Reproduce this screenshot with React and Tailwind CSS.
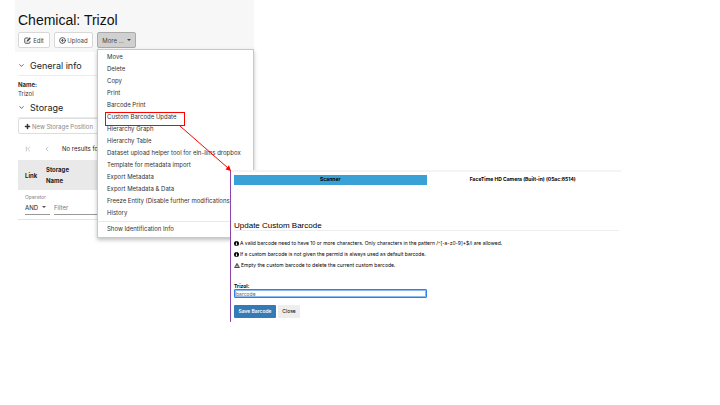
import { CircleArrowUp, ChevronDown, ChevronLeft, ChevronFirst, Plus } from "lucide-react";

const actions = [
  "Move",
  "Delete",
  "Copy",
  "Print",
  "Barcode Print",
  "Custom Barcode Update",
  "Hierarchy Graph",
  "Hierarchy Table",
  "Dataset upload helper tool for eln-lims dropbox",
  "Template for metadata import",
  "Export Metadata",
  "Export Metadata & Data",
  "Freeze Entity (Disable further modifications)",
  "History",
];

function Caret() {
  return (
    <svg viewBox="0 0 8 4" className="h-[2px] w-1" aria-hidden="true">
      <path d="M0 0h8L4 4z" fill="currentColor" />
    </svg>
  );
}

function EditIcon() {
  return (
    <svg viewBox="0 0 14 14" className="size-[7px]" fill="none" stroke="currentColor" aria-hidden="true">
      <path d="M8.500 2H3.500A2 2 0 0 0 1.500 4v6.500a2 2 0 0 0 2 2H10a2 2 0 0 0 2-2V8.500" strokeWidth="1.800" />
      <path d="M5.500 9l.6-2.600L11.500 1l2 2L8.100 8.400z" fill="currentColor" strokeWidth="0.500" />
    </svg>
  );
}

function InfoIcon() {
  return (
    <svg viewBox="0 0 12 12" className="size-[5px] shrink-0" aria-hidden="true">
      <circle cx="6" cy="6" r="6" fill="#000" />
      <path d="M5 2h2v1.500H5zM4.500 5H7v3.600h.8V10H4.300V8.600H5V6.200h-.5z" fill="#fff" />
    </svg>
  );
}

function WarningIcon() {
  return (
    <svg viewBox="0 0 12 11" className="h-[5px] w-[6px] shrink-0" aria-hidden="true">
      <path d="M6 1 11.200 10H.8z" fill="#fff" stroke="#000" strokeWidth="1.600" strokeLinejoin="round" />
      <path d="M5.200 4h1.600v3H5.200zM5.200 7.600h1.600v1.400H5.200z" fill="#000" />
    </svg>
  );
}

function MoreMenu() {
  return (
    <div className="absolute top-full left-0 mt-px w-[157px] border border-[#c8c8c8] bg-white pt-px pb-[2px] shadow-[0_2px_4px_rgba(0,0,0,0.25)]">
      <ul>
        {actions.map((action) => (
          <li key={action}>
            <button type="button" className="block h-3 pl-[9px] text-[6px] leading-3 whitespace-nowrap text-[#333]">
              {action}
            </button>
          </li>
        ))}
      </ul>
      <div className="mt-[2px] border-t border-[#e8e8e8] pt-px">
        <button type="button" className="block h-3 pl-[9px] text-[6px] leading-3 text-[#333]">
          Show Identification Info
        </button>
      </div>
    </div>
  );
}

function SectionTitle({ children }) {
  return (
    <h2 className="flex h-5 items-center gap-[5px] border-b border-[#ececec] text-[9px] text-[#222]">
      <ChevronDown className="size-[7px] text-[#555]" strokeWidth={3} />
      {children}
    </h2>
  );
}

function EntityView() {
  return (
    <main className="w-[239px]">
      <header className="bg-[#f7f7f7] px-[3px] pt-3 pb-1">
        <h1 className="h-5 font-['Liberation_Sans',sans-serif] text-[14px] leading-4 text-[#111]">Chemical: Trizol</h1>
        <div className="flex h-4 gap-1 text-[6px] text-[#444]">
          <button type="button" className="flex w-8 items-center justify-center gap-[2px] rounded-[2px] border border-[#d8d8d8] bg-white">
            <EditIcon />
            Edit
          </button>
          <button type="button" className="flex w-[39px] items-center justify-center gap-px rounded-[2px] border border-[#d8d8d8] bg-white">
            <CircleArrowUp className="size-[7px]" strokeWidth={3} />
            Upload
          </button>
          <div className="relative z-10">
            <button type="button" className="flex h-4 w-[39px] items-center justify-center gap-[3px] rounded-[2px] border border-[#aaa] bg-[#d0d0d0]">
              More ...
              <Caret />
            </button>
            <MoreMenu />
          </div>
        </div>
      </header>

      <div className="px-[3px] pt-1">
        <SectionTitle>General info</SectionTitle>
        <dl className="pt-1 text-[6px] leading-[9px] text-[#333]">
          <dt className="font-bold">Name:</dt>
          <dd>Trizol</dd>
        </dl>
        <SectionTitle>Storage</SectionTitle>
        <button type="button" className="flex h-4 w-[84px] items-center gap-px rounded-[2px] border border-[#ddd] pl-[5px] text-[6px] whitespace-nowrap text-[#888]">
          <Plus className="size-[7px] text-[#333]" strokeWidth={5} />
          New Storage Position
        </button>
        <div className="flex h-[26px] items-center gap-[11px] pt-[3px] pl-[6px] text-[6px] text-[#222]">
          <button type="button" aria-label="First page">
            <ChevronFirst className="size-2 text-[#aaa]" />
          </button>
          <button type="button" aria-label="Previous page">
            <ChevronLeft className="size-2 text-[#aaa]" />
          </button>
          <span>No results found</span>
        </div>
      </div>

      <table className="ml-[3px] w-[236px] table-fixed border-b border-[#e4e4e4] text-left text-[6px] text-[#222]">
        <thead>
          <tr className="h-[30px] bg-[#e9e9e9] leading-[11px]">
            <th className="w-7 pl-[7px]">Link</th>
            <th>
              Storage
              <br />
              Name
            </th>
          </tr>
        </thead>
        <tbody>
          <tr>
            <td colSpan={2} className="h-[29px] pb-1 pl-[7px] align-bottom">
              <div className="flex items-end gap-1">
                <label className="text-[5px] leading-[7px] text-[#888]">
                  Operator
                  <span className="relative flex h-[14px] w-[25px] items-center border-b border-[#999] text-[#222]">
                    <select className="w-full appearance-none bg-transparent text-[6px]" defaultValue="AND">
                      <option>AND</option>
                      <option>OR</option>
                    </select>
                    <span className="pointer-events-none absolute right-1 text-[#555]">
                      <Caret />
                    </span>
                  </span>
                </label>
                <input aria-label="Filter" placeholder="Filter" className="h-[14px] grow border-b border-[#999] text-[6px] placeholder:text-[#777]" />
              </div>
            </td>
          </tr>
        </tbody>
      </table>
    </main>
  );
}

function BarcodeDialog() {
  return (
    <section className="absolute top-[170px] left-[230px] z-20 w-[391px] border-l border-[#8e44ad] bg-white pb-1 text-[5px] text-black">
      <div className="border-t-2 border-[#f4f4f4] pt-[3px] pr-[2px] pl-[3px]">
        <div className="grid grid-cols-2 text-center font-bold">
          <button type="button" className="h-[10px] bg-[#39a1d6]">Scanner</button>
          <button type="button" className="h-[10px]">FaceTime HD Camera (Built-in) (05ac:8514)</button>
        </div>
        <h2 className="mt-[34px] h-3 border-b border-[#eee] font-['Liberation_Sans',sans-serif] text-[8px] leading-[14px]">
          Update Custom Barcode
        </h2>
        <div className="pt-[7px] leading-[11px]">
          <p className="flex items-center gap-px">
            <InfoIcon />
            {"A valid barcode need to have 10 or more characters. Only characters in the pattern /^[-a-z0-9]+$/i are allowed."}
          </p>
          <p className="flex items-center gap-px">
            <InfoIcon />
            If a custom barcode is not given the permId is always used as default barcode.
          </p>
          <p className="flex items-center gap-px">
            <WarningIcon />
            Empty the custom barcode to delete the current custom barcode.
          </p>
        </div>
        <label htmlFor="barcode" className="mt-3 block leading-[6px] font-bold">Trizol:</label>
        <input
          id="barcode"
          placeholder="barcode"
          className="block h-[9px] w-1/2 rounded-[1px] border border-[#2f7fdc] pl-px text-[5px] leading-[7px] ring-1 ring-[#8fbcf0] outline-none ring-inset placeholder:text-[#666]"
        />
        <div className="mt-[7px] flex gap-[2px]">
          <button type="button" className="h-[13px] w-[42px] rounded-[1px] bg-[#337ab7] font-semibold text-white">Save Barcode</button>
          <button type="button" className="h-[13px] w-[22px] rounded-[1px] bg-[#eee]">Close</button>
        </div>
      </div>
    </section>
  );
}

function Callout() {
  return (
    <svg className="pointer-events-none absolute top-0 left-0 z-30 h-60 w-64" viewBox="0 0 256 240" aria-hidden="true">
      <rect x="105.500" y="112.500" width="79" height="13" fill="none" stroke="#f00" />
      <path d="M180 126 228 168" stroke="#f00" />
      <path d="M231 171 225.500 169.500 229 165.300z" fill="#f00" />
    </svg>
  );
}

export default function App() {
  return (
    <div className="relative min-h-screen bg-white pl-[15px] font-[Inter,'Liberation_Sans',sans-serif]">
      <EntityView />
      <BarcodeDialog />
      <Callout />
    </div>
  );
}
